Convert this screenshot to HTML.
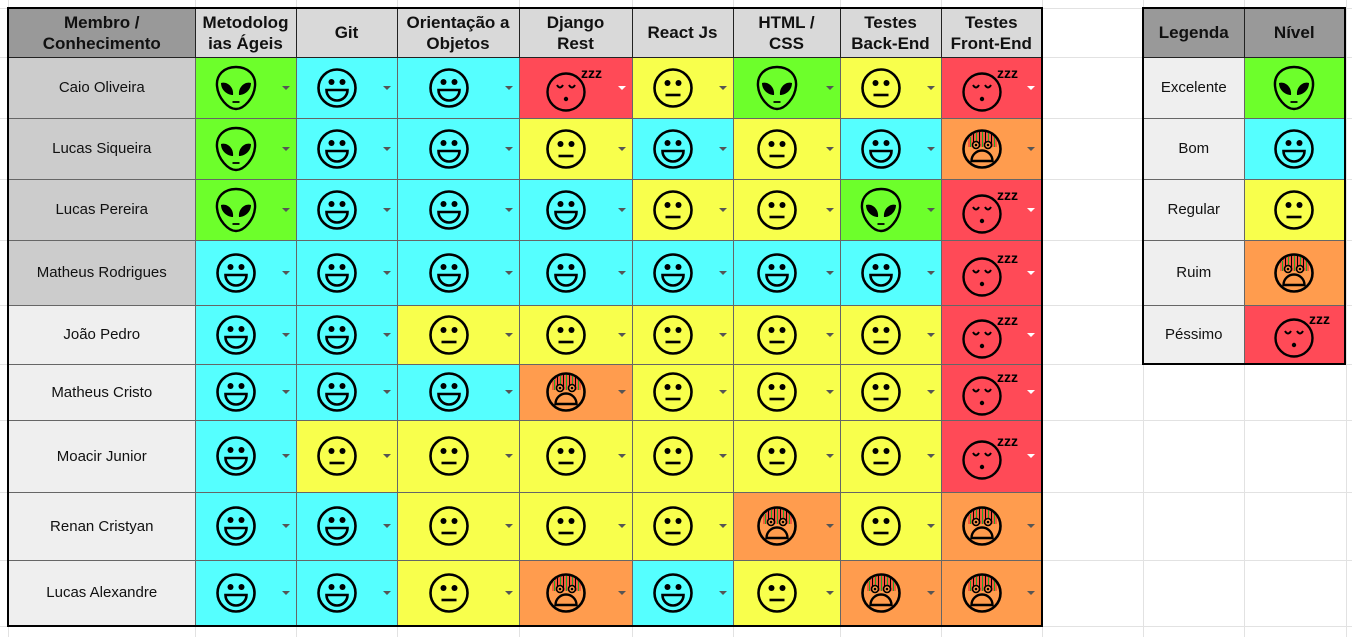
<!DOCTYPE html>
<html><head><meta charset="utf-8"><style>
body{margin:0;width:1352px;height:637px;background:#fff;position:relative;overflow:hidden;font-family:"Liberation Sans",sans-serif}
.gl{position:absolute;background:#e2e2e2}
table{position:absolute;border-collapse:collapse;table-layout:fixed;background:#fff}
td{border:1px solid #666;padding:0;text-align:center;position:relative;font-size:15px;color:#111}
th{border:1px solid #222;padding:0;font-size:17px;font-weight:bold;background:#d9d9d9;color:#111;line-height:21px}
table{border:2px solid #000}
th.d{background:#999}
td.n1{background:#ccc}td.n2{background:#efefef}
td.a{background:#6dff2b}td.b{background:#55ffff}td.c{background:#f8ff4c}td.d{background:#ff9c4e}td.e{background:#ff4a57}
td svg{position:absolute;top:50%;margin-top:-20px;width:40px;height:40px;overflow:visible}
td i{position:absolute;right:6px;top:50%;margin-top:-2px;width:0;height:0;border-left:4px solid transparent;border-right:4px solid transparent;border-top:4px solid #555}
td.e i{border-top-color:#fff}
#leg td svg{left:50%;margin-left:-20px}
</style></head><body>
<div id="grid"></div>
<svg width="0" height="0" style="position:absolute">
<defs>
<symbol id="sb" viewBox="0 0 40 40" overflow="visible"><circle cx="20" cy="20" r="18.5" fill="none" stroke="#000" stroke-width="2.6"/><circle cx="14.5" cy="14" r="3" /><circle cx="25.5" cy="14" r="3"/><path d="M9.5 22H30.5A10.5 10.5 0 0 1 9.5 22Z" fill="none" stroke="#000" stroke-width="2.6"/></symbol>
<symbol id="sc" viewBox="0 0 40 40" overflow="visible"><circle cx="20" cy="20" r="18.5" fill="none" stroke="#000" stroke-width="2.6"/><circle cx="14.5" cy="15" r="3"/><circle cx="25.5" cy="15" r="3"/><path d="M12.5 27H27.5" stroke="#000" stroke-width="2.6"/></symbol>
<symbol id="sa" viewBox="0 0 40 40" overflow="visible"><path d="M20 -1C8 -1 0 7 1 18C2 30 12 41 20 41C28 41 38 30 39 18C40 7 32 -1 20 -1Z" fill="none" stroke="#000" stroke-width="2.4"/><path d="M5 15C11 13 18 19 17 27C11 27 5 22 5 15Z"/><path d="M35 15C29 13 22 19 23 27C29 27 35 22 35 15Z"/><path d="M16.5 34H23.5" stroke="#000" stroke-width="1.8"/></symbol>
<symbol id="se" viewBox="0 0 40 40" overflow="visible"><circle cx="20" cy="24" r="18.5" fill="none" stroke="#000" stroke-width="2.4"/><path d="M11 17Q14 22 17 17M23 17Q26 22 29 17" fill="none" stroke="#000" stroke-width="2"/><circle cx="20" cy="31" r="2.2"/><text x="35" y="10" font-family="Liberation Sans,sans-serif" font-weight="bold" font-size="14">zzz</text></symbol>
<symbol id="sd" viewBox="0 0 40 40" overflow="visible"><path d="M7 9V18M10 6V18M13 4V18M16 3V18M19 2V18M22 2V18M25 3V18M28 4V18M31 6V18M34 9V18" stroke="#e33" stroke-width="1.2"/><path d="M8.5 8V18M14.5 4V18M20.5 2V18M26.5 4V18M32.5 8V18" stroke="#2a2" stroke-width="1"/><path d="M11.5 5V18M17.5 3V18M23.5 3V18M29.5 5V18" stroke="#000" stroke-width="1"/><circle cx="20" cy="20" r="18.5" fill="none" stroke="#000" stroke-width="2.6"/><circle cx="14" cy="16" r="3.5" fill="#ff9c4e" stroke="#000" stroke-width="1.6"/><circle cx="26" cy="16" r="3.5" fill="#ff9c4e" stroke="#000" stroke-width="1.6"/><circle cx="14" cy="16" r="1.3"/><circle cx="26" cy="16" r="1.3"/><path d="M9.5 32A10.5 10.5 0 0 1 30.5 32Z" fill="none" stroke="#000" stroke-width="2.4"/></symbol>
</defs></svg>
<table style="left:7px;top:7px;width:1036px">
<colgroup><col style="width:187px"><col style="width:101px"><col style="width:101px"><col style="width:122px"><col style="width:113px"><col style="width:101px"><col style="width:107px"><col style="width:101px"><col style="width:101px"></colgroup>
<tr style="height:49px"><th class="d">Membro /<br>Conhecimento</th><th>Metodolog<br>ias Ágeis</th><th>Git</th><th>Orientação a<br>Objetos</th><th>Django<br>Rest</th><th>React Js</th><th>HTML /<br>CSS</th><th>Testes<br>Back-End</th><th>Testes<br>Front-End</th></tr>
<tr style="height:61px" data-r="abbecace"><td class="n1">Caio Oliveira</td></tr>
<tr style="height:61px" data-r="abbcbcbd"><td class="n1">Lucas Siqueira</td></tr>
<tr style="height:61px" data-r="abbbccae"><td class="n1">Lucas Pereira</td></tr>
<tr style="height:65px" data-r="bbbbbbbe"><td class="n1">Matheus Rodrigues</td></tr>
<tr style="height:59px" data-r="bbccccce"><td class="n2">João Pedro</td></tr>
<tr style="height:56px" data-r="bbbdccce"><td class="n2">Matheus Cristo</td></tr>
<tr style="height:72px" data-r="bcccccce"><td class="n2">Moacir Junior</td></tr>
<tr style="height:68px" data-r="bbcccdcd"><td class="n2">Renan Cristyan</td></tr>
<tr style="height:66px" data-r="bbcdbcdd"><td class="n2">Lucas Alexandre</td></tr>
</table>
<table id="leg" style="left:1142px;top:7px;width:204px">
<colgroup><col style="width:101px"><col style="width:101px"></colgroup>
<tr style="height:49px"><th class="d">Legenda</th><th class="d">Nível</th></tr>
<tr style="height:61px"><td class="n2">Excelente</td><td class="a" data-i="a"></td></tr>
<tr style="height:61px"><td class="n2">Bom</td><td class="b" data-i="b"></td></tr>
<tr style="height:61px"><td class="n2">Regular</td><td class="c" data-i="c"></td></tr>
<tr style="height:65px"><td class="n2">Ruim</td><td class="d" data-i="d"></td></tr>
<tr style="height:59px"><td class="n2">Péssimo</td><td class="e" data-i="e"></td></tr>
</table>
<script>
var g=document.getElementById('grid'),xs=[8,195,296,397,519,632,733,840,941,1042,1143,1244,1346],ys=[8,57,118,179,240,305,364,420,492,560,626];
xs.forEach(function(x){var d=document.createElement('div');d.className='gl';d.style.cssText='left:'+x+'px;top:0;width:1px;height:637px';g.appendChild(d)});
ys.forEach(function(y){var d=document.createElement('div');d.className='gl';d.style.cssText='left:0;top:'+y+'px;width:1352px;height:1px';g.appendChild(d)});
function ic(k){return '<svg><use href="#s'+k+'"/></svg>'}
var cw=[101,101,122,113,101,107,101,101];
document.querySelectorAll('tr[data-r]').forEach(function(tr){var r=tr.getAttribute('data-r');
for(var i=0;i<8;i++){var k=r[i],td=document.createElement('td');td.className=k;td.innerHTML=ic(k)+'<i></i>';td.querySelector('svg').style.left=((cw[i]-20)/2-20)+'px';tr.appendChild(td);}});
document.querySelectorAll('td[data-i]').forEach(function(td){td.innerHTML=ic(td.getAttribute('data-i'))});
</script>
</body></html>
